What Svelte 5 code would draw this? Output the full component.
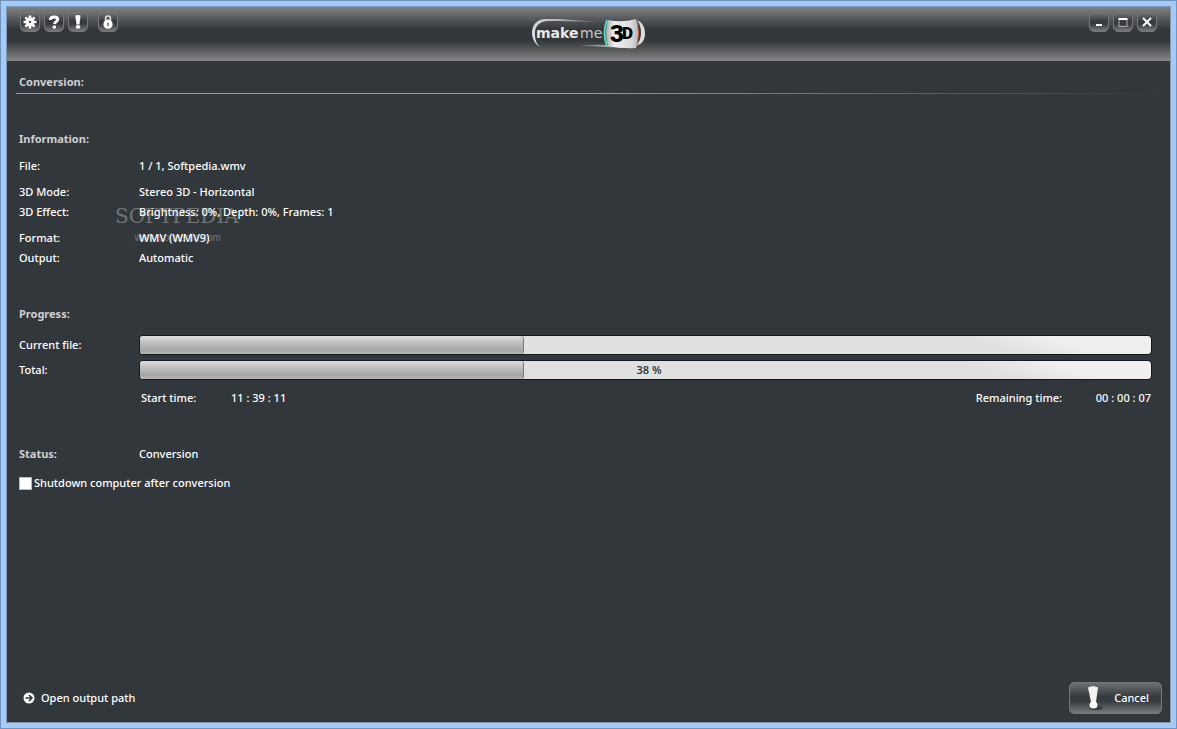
<script>
  let shutdown = $state(false);

  const infoGroups = [
    [{ label: 'File:', value: '1 / 1, Softpedia.wmv' }],
    [
      { label: '3D Mode:', value: 'Stereo 3D - Horizontal' },
      { label: '3D Effect:', value: 'Brightness: 0%, Depth: 0%, Frames: 1' }
    ],
    [
      { label: 'Format:', value: 'WMV (WMV9)' },
      { label: 'Output:', value: 'Automatic' }
    ]
  ];

  const bars = [
    { label: 'Current file:', percent: 38, text: '' },
    { label: 'Total:', percent: 38, text: '38 %' }
  ];
</script>

<div class="window">
  <div class="client">
    <header>
      <div class="tools">
        <button class="square" aria-label="Settings">
          <svg viewBox="0 0 14 14" width="14" height="14">
            <g stroke="#fff" stroke-width="2.6">
              <path d="M7 .5v13M.5 7h13M2.4 2.4l9.2 9.2M11.6 2.4l-9.200 9.200" />
            </g>
            <circle cx="7" cy="7" r="4.4" fill="#fff" />
            <circle cx="7" cy="7" r="1.3" fill="#55585a" />
          </svg>
        </button>
        <button class="square" aria-label="Help">
          <svg viewBox="0 0 14 14" width="14" height="14">
            <path d="M3.2 4.8C3.4 2.6 5 1.9 7.2 1.9c2.200 0 3.500 1 3.500 2.600 0 2.200-2.900 2-3.200 4.500" fill="none" stroke="#fff" stroke-width="3" />
            <circle cx="7.3" cy="12" r="1.8" fill="#fff" />
          </svg>
        </button>
        <button class="square" aria-label="About">
          <svg viewBox="0 0 14 14" width="14" height="14">
            <path d="M4.3 .5q2.7-.8 5.200 0l-1 8.900H5.500z" fill="#fff" />
            <ellipse cx="7" cy="11.9" rx="2.3" ry="1.8" fill="#fff" />
          </svg>
        </button>
        <button class="square lock" aria-label="Activate">
          <svg viewBox="0 0 14 14" width="14" height="14">
            <path d="M4.6 7V3.4a2.400 2.400 0 0 1 4.800 0V7" fill="none" stroke="#ddd" stroke-width="1.7" />
            <circle cx="7" cy="9.2" r="4.6" fill="#fff" />
            <path d="M6.2 7.8h1.600v1.500L7.500 11.500h-.9z" fill="#55585a" />
          </svg>
        </button>
      </div>

      <svg class="logo" viewBox="0 0 114 32" width="114" height="32" role="img" aria-label="makeme 3D">
        <defs>
          <linearGradient id="swoosh-top">
            <stop offset="0" stop-color="#ddd" />
            <stop offset="1" stop-color="#ddd" stop-opacity="0.2" />
          </linearGradient>
          <linearGradient id="swoosh-bottom">
            <stop offset="0" stop-color="#ddd" stop-opacity="0.2" />
            <stop offset="1" stop-color="#ddd" />
          </linearGradient>
          <linearGradient id="badge">
            <stop offset="0" stop-color="#aaa" />
            <stop offset="0.25" stop-color="#eee" />
            <stop offset="0.75" stop-color="#ddd" />
            <stop offset="1" stop-color="#b8b8b8" />
          </linearGradient>
        </defs>
        <path d="M8 30C3 27 0 22 0 16 0 8 5 2 14 2h14l40 3-40-1H15C7 5 3 9 3 16c0 6 1 10 5 14z" fill="url(#swoosh-top)" />
        <path d="M46 29q15-2 28-1l24 3-24-1q-14-1-28-1z" fill="url(#swoosh-bottom)" />
        <path d="M105 3c6 3 8 8 8 13 0 6-2 11-9 13 7-7 6-20 1-26z" fill="#ddd" />
        <path d="M75 3q-5 13 0 26" fill="none" stroke="#4ddcc0" stroke-width="2" />
        <path d="M76 3q14 3 28-1 5 14 0 29-13 1-28-2-4-13 0-26z" fill="url(#badge)" />
        <path d="M105 4q3 12 0 24" fill="none" stroke="#e36b3c" stroke-width="1" />
        <text class="logo-bold" x="4" y="21">make</text>
        <text class="logo-light" x="48" y="21">me</text>
        <text class="logo-three" x="78" y="25">3</text>
        <text class="logo-dee" x="90" y="22">D</text>
      </svg>

      <div class="controls">
        <button class="square" aria-label="Minimize">
          <svg viewBox="0 0 14 14" width="14" height="14"><path d="M4 9h6v2H4z" fill="#fff" /></svg>
        </button>
        <button class="square" aria-label="Maximize">
          <svg viewBox="0 0 14 14" width="14" height="14">
            <path d="M3 4v7.500h8V4" fill="none" stroke="#aaa" />
            <path d="M2.500 3h9v2h-9z" fill="#fff" />
          </svg>
        </button>
        <button class="square" aria-label="Close">
          <svg viewBox="0 0 14 14" width="14" height="14">
            <path d="M3 3l8 8M11 3l-8 8" stroke="#fff" stroke-width="2" />
          </svg>
        </button>
      </div>
    </header>

    <main>
      <h1>Conversion:</h1>

      <section class="info">
        <h2>Information:</h2>
        {#each infoGroups as group}
          <dl>
            {#each group as row}
              <dt>{row.label}</dt>
              <dd>{row.value}</dd>
            {/each}
          </dl>
        {/each}
        <div class="watermark" aria-hidden="true">
          <div class="mark">SOFTPEDIA<sup>™</sup></div>
          <div class="site">www.softpedia.com</div>
        </div>
      </section>

      <section class="progress">
        <h2>Progress:</h2>
        {#each bars as bar}
          <div class="bar-row">
            <span>{bar.label}</span>
            <div class="bar" role="progressbar" aria-label={bar.label} aria-valuenow={bar.percent} aria-valuemin="0" aria-valuemax="100">
              <div class="fill" style="width: {bar.percent}%"></div>
              <span class="percent">{bar.text}</span>
            </div>
          </div>
        {/each}
        <div class="times">
          <span class="time-label">Start time:</span>
          <span>11 : 39 : 11</span>
          <span class="time-label remaining">Remaining time:</span>
          <span>00 : 00 : 07</span>
        </div>
      </section>

      <section class="status">
        <h2>Status:</h2>
        <span>Conversion</span>
      </section>
      <label class="shutdown">
        <input type="checkbox" bind:checked={shutdown} />
        Shutdown computer after conversion
      </label>
    </main>

    <footer>
      <a href="#output">
        <svg viewBox="0 0 12 12" width="12" height="12">
          <circle cx="6" cy="6" r="5.5" fill="#fff" />
          <path d="M2.5 6h6M6 3l3 3-3 3" fill="none" stroke="#32373b" stroke-width="1.6" />
        </svg>
        Open output path
      </a>
      <button class="cancel">
        <svg viewBox="0 0 20 26" width="20" height="26">
          <ellipse cx="12" cy="23" rx="7" ry="2" fill="#222" opacity="0.6" />
          <path d="M4 2.500Q9 0 14 2.500L12 17q-3 1.500-5 0z" fill="#f2f2f2" />
          <ellipse cx="9.500" cy="20" rx="4" ry="3.500" fill="#fff" />
        </svg>
        Cancel
      </button>
    </footer>
  </div>
</div>

<style>
  :global(body) {
    margin: 0;
  }

  .window {
    box-sizing: border-box;
    min-height: 100vh;
    display: flex;
    padding: 5px;
    background: #a4cbf8;
    border: 1px solid #7593ba;
    color: #fff;
    font: 500 11px/20px "Noto Sans", "Open Sans", sans-serif;
  }

  .client {
    flex: 1;
    display: flex;
    flex-direction: column;
    border: 1px solid #8298b3;
    background: #32373b;
  }

  header {
    display: grid;
    grid-template-columns: 1fr auto 1fr;
    align-items: start;
    height: 54px;
    background: linear-gradient(#818181, #5a5c5e 20%, #32373b 42%, #32373b 62%, #5c5e60 82%, #868686);
  }

  .tools,
  .controls {
    display: flex;
    gap: 4px;
    padding: 5px 13px;
  }

  .controls {
    justify-content: flex-end;
  }

  button {
    font: inherit;
    color: inherit;
    border: 1px solid #777;
    background: linear-gradient(#6e7072, #373b3f 45%, #373b3f 60%, #77797b);
  }

  .square {
    display: grid;
    place-items: center;
    width: 20px;
    height: 20px;
    padding: 0;
    border-radius: 5px;
  }

  .lock {
    margin-left: 6px;
  }

  .logo {
    margin-top: 10px;
  }

  .logo text {
    font-family: "DejaVu Sans", sans-serif;
    font-size: 14px;
    fill: #e8e8e8;
  }

  .logo .logo-bold {
    font-weight: bold;
  }

  .logo .logo-light {
    font-weight: 400;
    fill: #c8c8c8;
  }

  .logo .logo-three,
  .logo .logo-dee {
    font-family: Roboto, sans-serif;
    font-weight: 900;
    fill: #000;
  }

  .logo .logo-three {
    font-size: 24px;
  }

  .logo .logo-dee {
    font-size: 17px;
  }

  main {
    flex: 1;
    padding: 11px 9px 0;
  }

  h1,
  h2 {
    margin: 0;
    padding-left: 3px;
    font-size: 11px;
    font-weight: 700;
    color: #d0d0d0;
  }

  h1 {
    padding-bottom: 1px;
    border-bottom: 1px solid;
    border-image: linear-gradient(to right, #999 50%, #32373b) 1;
  }

  .info {
    position: relative;
    margin-top: 35px;
  }

  .info h2 {
    padding-bottom: 1px;
  }

  dl {
    display: grid;
    grid-template-columns: 120px 1fr;
    margin: 6px 0 0;
    padding-left: 3px;
  }

  dd {
    margin: 0;
  }

  .watermark {
    position: absolute;
    top: 75px;
    left: 99px;
    opacity: 0.3;
    text-align: center;
    pointer-events: none;
  }

  .mark {
    font: 20px/24px "DejaVu Serif", serif;
  }

  .mark sup {
    font-size: 8px;
    line-height: 1px;
  }

  .site {
    padding-right: 6px;
    font: 10px/20px "Liberation Sans", sans-serif;
  }

  .progress {
    margin-top: 36px;
  }

  .progress h2 {
    padding-bottom: 6px;
  }

  .bar-row {
    display: grid;
    grid-template-columns: 120px 1fr;
    margin-top: 5px;
    padding: 0 9px 0 3px;
  }

  .bar {
    position: relative;
    box-sizing: border-box;
    height: 20px;
    border: 1px solid #15181a;
    border-radius: 4px;
    background: linear-gradient(17deg, #e0e0e0 82%, #efefef 90%);
    overflow: hidden;
  }

  .fill {
    box-sizing: border-box;
    height: 100%;
    border-right: 1px solid #777;
    border-radius: 0 3px 3px 0;
    background: linear-gradient(#dedede, #c4c4c4 30%, #a5a5a5 80%, #b8b8b8);
  }

  .percent {
    position: absolute;
    inset: 0;
    padding-left: 7px;
    line-height: 18px;
    text-align: center;
    color: #32373b;
    font-weight: 600;
  }

  .times {
    display: flex;
    margin-top: 8px;
    padding: 0 10px 0 125px;
  }

  .time-label {
    width: 90px;
  }

  .remaining {
    width: 120px;
    margin-left: auto;
  }

  .status {
    display: grid;
    grid-template-columns: 123px 1fr;
    margin-top: 36px;
  }

  .shutdown {
    display: flex;
    align-items: center;
    gap: 2px;
    width: fit-content;
    margin: 9px 0 0 3px;
  }

  input {
    appearance: none;
    width: 13px;
    height: 13px;
    margin: 0;
    border: 1px solid #bbb;
    background: #fff;
  }

  input:checked {
    background: radial-gradient(#32373b 40%, #fff 45%);
  }

  footer {
    display: flex;
    align-items: center;
    justify-content: space-between;
    padding: 8px 8px 8px 16px;
  }

  a {
    display: flex;
    align-items: center;
    gap: 6px;
    color: inherit;
    text-decoration: none;
  }

  .cancel {
    display: flex;
    align-items: center;
    gap: 10px;
    height: 32px;
    padding: 0 12px 0 14px;
    border-radius: 5px;
  }
</style>
